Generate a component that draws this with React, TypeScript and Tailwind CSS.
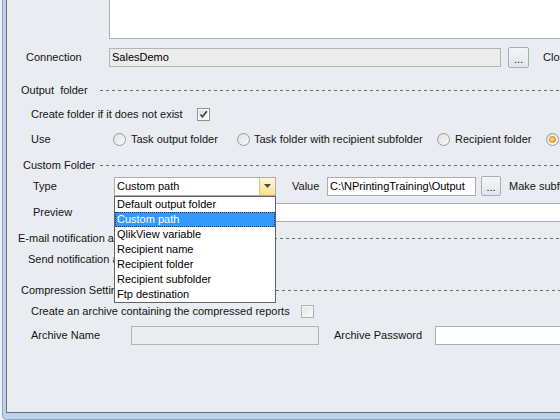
import type { ReactNode } from "react";

const dash =
  "bg-[repeating-linear-gradient(90deg,#6e6e6e_0px,#6e6e6e_3px,transparent_3px,transparent_6px)]";

function SectionHeader({
  title,
  pl,
  labelW,
  clip,
}: {
  title: string;
  pl: string;
  labelW: string;
  clip?: string;
}) {
  return (
    <div className={`flex h-[14px] items-center ${pl}`}>
      {clip ? (
        <>
          <span className={`shrink-0 overflow-hidden whitespace-pre ${clip}`}>{title}</span>
          <span className={`shrink-0 ${labelW}`} />
        </>
      ) : (
        <span className={`shrink-0 whitespace-pre ${labelW}`}>{title}</span>
      )}
      <div className={`h-px flex-1 ${dash}`} />
    </div>
  );
}

function Checkbox({ checked, disabled }: { checked?: boolean; disabled?: boolean }) {
  return (
    <span
      className={`flex h-[13px] w-[13px] shrink-0 items-center justify-center border ${
        disabled ? "border-[#b1b1b1] bg-[#f4f4f4]" : "border-[#8e8f8f] bg-white"
      }`}
    >
      <span
        className={`flex h-[9px] w-[9px] items-center justify-center ${
          disabled
            ? "bg-linear-to-br from-[#e6e6e6] to-[#f7f7f7]"
            : "bg-linear-to-br from-[#dcdcdc] to-[#fbfbfb]"
        }`}
      >
        {checked && (
          <svg width="9" height="9" viewBox="0 0 9 9">
            <path d="M1.5 4.5 L3.5 6.8 L7.8 1.2" fill="none" stroke="#3d3d3d" strokeWidth="1.6" />
          </svg>
        )}
      </span>
    </span>
  );
}

function Radio({ checked }: { checked?: boolean }) {
  return (
    <span className="flex h-[13px] w-[13px] shrink-0 items-center justify-center rounded-full border border-[#9a9a9a] bg-linear-to-br from-[#dedede] to-[#fbfbfb]">
      {checked && (
        <span className="h-[7px] w-[7px] rounded-full border border-[#d98a1a] bg-[radial-gradient(circle_at_40%_40%,#ffe07a,#f4a21c)]" />
      )}
    </span>
  );
}

function DotsButton({ h = "h-[21px]", w = "w-[21px]" }: { h?: string; w?: string }) {
  return (
    <span
      className={`flex shrink-0 items-end justify-center rounded-[2px] border border-[#a9aeb4] bg-linear-to-b from-[#f3f5f8] to-[#e3e7ec] pb-[3px] leading-[10px] ${h} ${w}`}
    >
      ...
    </span>
  );
}

function TextBox({
  children,
  className,
  disabled,
}: {
  children?: ReactNode;
  className: string;
  disabled?: boolean;
}) {
  return (
    <div
      className={`flex h-[19px] items-center border pl-[2px] text-black ${
        disabled ? "border-[#b2b4b8] bg-[#ececec]" : "border-[#abadb3] bg-white"
      } ${className}`}
    >
      {children}
    </div>
  );
}

const options = [
  "Default output folder",
  "Custom path",
  "QlikView variable",
  "Recipient name",
  "Recipient folder",
  "Recipient subfolder",
  "Ftp destination",
];

export default function App() {
  return (
    <div className="flex h-[420px] w-[560px] flex-col overflow-hidden bg-[#eef2f7] font-['Liberation_Sans',Arial,sans-serif] text-[11px] leading-[13px] text-[#141414]">
      <div className="ml-[2px] flex flex-1 rounded-bl-[5px] border-b border-l border-[#8aa3c1] bg-[#bcd3eb] pb-[6px] pl-[3px]">
        <div className="flex-1 overflow-hidden border-b border-l border-[#6e6e6e] bg-[#e9ecf0]">
          <div className="mt-[-21px] flex flex-col">
            {/* Description */}
            <div className="flex h-[60px] pl-[19px]">
              <span className="w-[83px] shrink-0 pt-[9px]">Description</span>
              <div className="h-[60px] w-[470px] shrink-0 border border-[#abadb3] bg-white" />
            </div>

            {/* Connection */}
            <div className="mt-[8px] flex h-[21px] items-center pl-[19px]">
              <span className="w-[83px] shrink-0">Connection</span>
              <TextBox disabled className="w-[392px] shrink-0">
                SalesDemo
              </TextBox>
              <span className="ml-[7px]">
                <DotsButton />
              </span>
              <span className="ml-[14px] whitespace-nowrap">Close</span>
            </div>

            <div className="mt-[15px]">
              <SectionHeader title="Output  folder" pl="pl-[14px]" labelW="w-[79px]" />
            </div>

            {/* Create folder */}
            <div className="mt-[10px] flex h-[14px] items-center pl-[24px]">
              <span className="w-[166px] shrink-0">Create folder if it does not exist</span>
              <Checkbox checked />
            </div>

            {/* Use */}
            <div className="mt-[11px] flex h-[14px] items-center whitespace-nowrap pl-[24px]">
              <span className="w-[82px] shrink-0">Use</span>
              <span className="flex w-[124px] shrink-0 items-center gap-[5px]">
                <Radio />
                Task output folder
              </span>
              <span className="flex w-[200px] shrink-0 items-center gap-[4px]">
                <Radio />
                Task folder with recipient subfolder
              </span>
              <span className="flex w-[109px] shrink-0 items-center gap-[5px]">
                <Radio />
                Recipient folder
              </span>
              <span className="flex shrink-0 items-center gap-[5px]">
                <Radio checked />
                Custom folder
              </span>
            </div>

            <div className="mt-[12px]">
              <SectionHeader title="Custom Folder" pl="pl-[16px]" labelW="w-[77px]" />
            </div>

            {/* Type */}
            <div className="mt-[4px] flex h-[20px] items-center whitespace-nowrap pl-[26px]">
              <span className="w-[81px] shrink-0">Type</span>
              <div className="relative z-10 w-[162px] shrink-0">
                <div className="flex h-[19px] border border-[#abadb3] bg-white">
                  <span className="flex flex-1 items-center pl-[2px] text-black">Custom path</span>
                  <span className="flex w-[16px] items-center justify-center border-l border-[#e2c46e] bg-linear-to-b from-[#fef7d8] to-[#fbe08c]">
                    <svg width="7" height="4" viewBox="0 0 7 4">
                      <path d="M0 0 H7 L3.5 4 Z" fill="#4d4d4d" />
                    </svg>
                  </span>
                </div>
                <div className="absolute left-0 top-[19px] w-[162px] border border-[#646464] bg-white text-black">
                  {options.map((o) => (
                    <div
                      key={o}
                      className={`h-[15px] pl-[2px] leading-[15px] ${
                        o === "Custom path"
                          ? "bg-[#3399ff] text-white outline-1 -outline-offset-1 outline-dotted outline-[#1c3a5c]"
                          : ""
                      }`}
                    >
                      {o}
                    </div>
                  ))}
                </div>
              </div>
              <span className="ml-[16px] w-[35px] shrink-0">Value</span>
              <TextBox className="w-[149px] shrink-0">C:\NPrintingTraining\Output</TextBox>
              <span className="ml-[5px]">
                <DotsButton h="h-[20px]" w="w-[20px]" />
              </span>
              <span className="ml-[8px]">Make subfolders</span>
            </div>

            {/* Preview */}
            <div className="mt-[7px] flex h-[19px] items-center pl-[26px]">
              <span className="w-[81px] shrink-0">Preview</span>
              <TextBox className="w-[480px] shrink-0" />
            </div>

            <div className="mt-[9px]">
              <SectionHeader
                title="E-mail notification alerts"
                pl="pl-[11px]"
                clip="w-[96px]"
                labelW="w-[40px]"
              />
            </div>

            <div className="mt-[7px] flex h-[14px] items-center pl-[21px]">
              <span className="w-[86px] shrink-0 overflow-hidden whitespace-nowrap">
                Send notification alert
              </span>
            </div>

            <div className="mt-[17px]">
              <SectionHeader
                title="Compression Settings"
                pl="pl-[14px]"
                clip="w-[93px]"
                labelW="w-[30px]"
              />
            </div>

            {/* Create archive */}
            <div className="mt-[7px] flex h-[14px] items-center pl-[24px]">
              <span className="w-[270px] shrink-0">
                Create an archive containing the compressed reports
              </span>
              <Checkbox disabled />
            </div>

            {/* Archive name */}
            <div className="mt-[8px] flex h-[19px] items-center whitespace-nowrap pl-[24px]">
              <span className="w-[100px] shrink-0">Archive Name</span>
              <TextBox disabled className="w-[188px] shrink-0" />
              <span className="ml-[15px] w-[101px] shrink-0">Archive Password</span>
              <TextBox className="w-[160px] shrink-0" />
            </div>
          </div>
        </div>
      </div>
    </div>
  );
}
